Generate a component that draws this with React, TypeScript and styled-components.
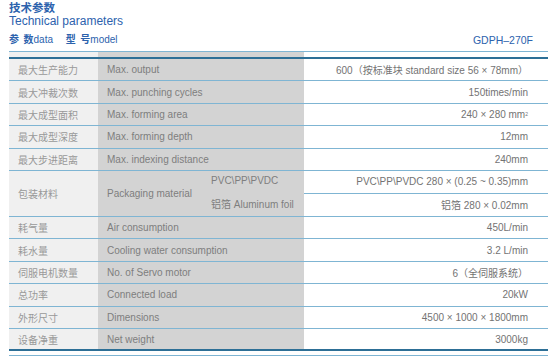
import React from 'react'
import styled, { createGlobalStyle } from 'styled-components'

const GlobalStyle = createGlobalStyle`
  html, body {
    margin: 0;
    padding: 0;
    background: #ffffff;
  }
  body {
    font-family: "Liberation Sans", Arial, "Noto Sans CJK SC", sans-serif;
  }
`

const BLUE = '#2c62ad'
const LINE = '#7fb5d3'
const DARK_LINE = '#2d6f96'
const COL1 = '#f0f0f0'
const COL2 = '#d3d3d3'

type Spec = {
  zh: string
  en: string
  value: React.ReactNode
}

const rowsTop: Spec[] = [
  { zh: '最大生产能力', en: 'Max. output', value: '600（按标准块 standard size 56 × 78mm）' },
  { zh: '最大冲裁次数', en: 'Max. punching cycles', value: '150times/min' },
  { zh: '最大成型面积', en: 'Max. forming area', value: <>240 × 280 mm<sup>2</sup></> },
  { zh: '最大成型深度', en: 'Max. forming depth', value: '12mm' },
  { zh: '最大步进距离', en: 'Max. indexing distance', value: '240mm' }
]

const rowsBottom: Spec[] = [
  { zh: '耗气量', en: 'Air consumption', value: '450L/min' },
  { zh: '耗水量', en: 'Cooling water consumption', value: '3.2 L/min' },
  { zh: '伺服电机数量', en: 'No. of Servo motor', value: '6（全伺服系统）' },
  { zh: '总功率', en: 'Connected load', value: '20kW' },
  { zh: '外形尺寸', en: 'Dimensions', value: '4500 × 1000 × 1800mm' },
  { zh: '设备净重', en: 'Net weight', value: '3000kg' }
]

export default function App() {
  return (
    <S.Page>
      <GlobalStyle />
      <S.Header>
        <S.Title>技术参数</S.Title>
        <S.Subtitle>Technical parameters</S.Subtitle>
        <S.Caption>
          <S.Label>
            <b>参  数</b>data　 <b>型  号</b>model
          </S.Label>
          <S.Model>GDPH–270F</S.Model>
        </S.Caption>
      </S.Header>

      <S.Table>
        <S.Strip>
          <S.Cell $col={1} />
          <S.Cell $col={2} />
          <S.Cell $col={3} />
        </S.Strip>

        {rowsTop.map(r => (
          <S.Row key={r.zh}>
            <S.Cell $col={1}>{r.zh}</S.Cell>
            <S.Cell $col={2}>{r.en}</S.Cell>
            <S.Cell $col={3}>{r.value}</S.Cell>
          </S.Row>
        ))}

        <S.Row $tall>
          <S.Cell $col={1}>包装材料</S.Cell>
          <S.Cell $col={2}>
            <S.Split>
              <span>Packaging material</span>
              <S.SubList>
                <span>PVC\PP\PVDC</span>
                <span>铝箔 Aluminum foil</span>
              </S.SubList>
            </S.Split>
          </S.Cell>
          <S.Stack>
            <S.SubValue>PVC\PP\PVDC 280 × (0.25 ~ 0.35)mm</S.SubValue>
            <S.SubValue>铝箔 280 × 0.02mm</S.SubValue>
          </S.Stack>
        </S.Row>

        {rowsBottom.map((r, i) => (
          <S.Row key={r.zh} $last={i === rowsBottom.length - 1}>
            <S.Cell $col={1}>{r.zh}</S.Cell>
            <S.Cell $col={2}>{r.en}</S.Cell>
            <S.Cell $col={3}>{r.value}</S.Cell>
          </S.Row>
        ))}
      </S.Table>
      <S.Foot />
    </S.Page>
  )
}

export const S = {
  Page: styled.div`
    width: 553px;
    height: 359px;
    box-sizing: border-box;
    padding: 0 5px 0 9px;
    overflow: hidden;
  `,
  Header: styled.div`
    display: flex;
    flex-direction: column;
    color: ${BLUE};
    height: 51px;
  `,
  Title: styled.div`
    font-family: "Noto Sans CJK SC", sans-serif;
    font-weight: 700;
    font-size: 11.5px;
    line-height: 14px;
  `,
  Subtitle: styled.div`
    font-size: 12px;
    line-height: 14px;
  `,
  Caption: styled.div`
    display: flex;
    justify-content: space-between;
    align-items: center;
    margin-top: 3px;
    padding-right: 15px;
  `,
  Label: styled.span`
    font-size: 10px;
    line-height: 14px;
    white-space: pre;

    b {
      font-family: "Noto Sans CJK SC", sans-serif;
      font-weight: 700;
    }
  `,
  Model: styled.span`
    font-size: 10.5px;
    line-height: 14px;
    padding-top: 2px;
  `,
  Table: styled.div`
    width: 539px;
    display: flex;
    flex-direction: column;
  `,
  Strip: styled.div`
    display: grid;
    grid-template-columns: 89px 206px 1fr;
    height: 5px;
    border-top: 1px solid ${LINE};
    border-bottom: 2px solid ${DARK_LINE};
  `,
  Row: styled.div<{ $tall?: boolean; $last?: boolean }>`
    display: grid;
    grid-template-columns: 89px 206px 1fr;
    height: ${p => (p.$tall ? '46px' : '22.4px')};
    box-sizing: border-box;
    border-bottom: ${p => (p.$last ? `2px solid ${DARK_LINE}` : `1px solid ${LINE}`)};
  `,
  Cell: styled.div<{ $col: 1 | 2 | 3 }>`
    display: flex;
    align-items: center;
    justify-content: ${p => (p.$col === 3 ? 'flex-end' : 'flex-start')};
    padding: ${p => (p.$col === 3 ? '0 20px 0 0' : '0 0 0 9px')};
    background: ${p => (p.$col === 1 ? COL1 : p.$col === 2 ? COL2 : '#ffffff')};
    color: ${p => (p.$col === 1 ? '#999999' : p.$col === 2 ? '#7e7e7e' : '#737373')};
    font-size: 10px;
    font-weight: 400;
    font-family: ${p =>
      p.$col === 1
        ? '"Noto Sans CJK SC", sans-serif'
        : '"Liberation Sans", Arial, "Noto Sans CJK SC", sans-serif'};
    white-space: nowrap;

    sup {
      font-size: 5px;
      line-height: 0;
      vertical-align: 5px;
    }
  `,
  Split: styled.div`
    display: flex;
    align-items: center;
    gap: 19px;
    width: 100%;
  `,
  SubList: styled.div`
    display: flex;
    flex-direction: column;
    gap: 10px;
  `,
  Stack: styled.div`
    display: flex;
    flex-direction: column;
  `,
  SubValue: styled.div`
    flex: 1;
    display: flex;
    align-items: center;
    justify-content: flex-end;
    padding-right: 20px;
    font-size: 10px;
    color: #737373;
    white-space: nowrap;

    & + & {
      border-top: 1px solid ${LINE};
    }
  `,
  Foot: styled.div`
    width: 539px;
    margin-top: 4px;
    border-top: 1px solid ${LINE};
  `
}
